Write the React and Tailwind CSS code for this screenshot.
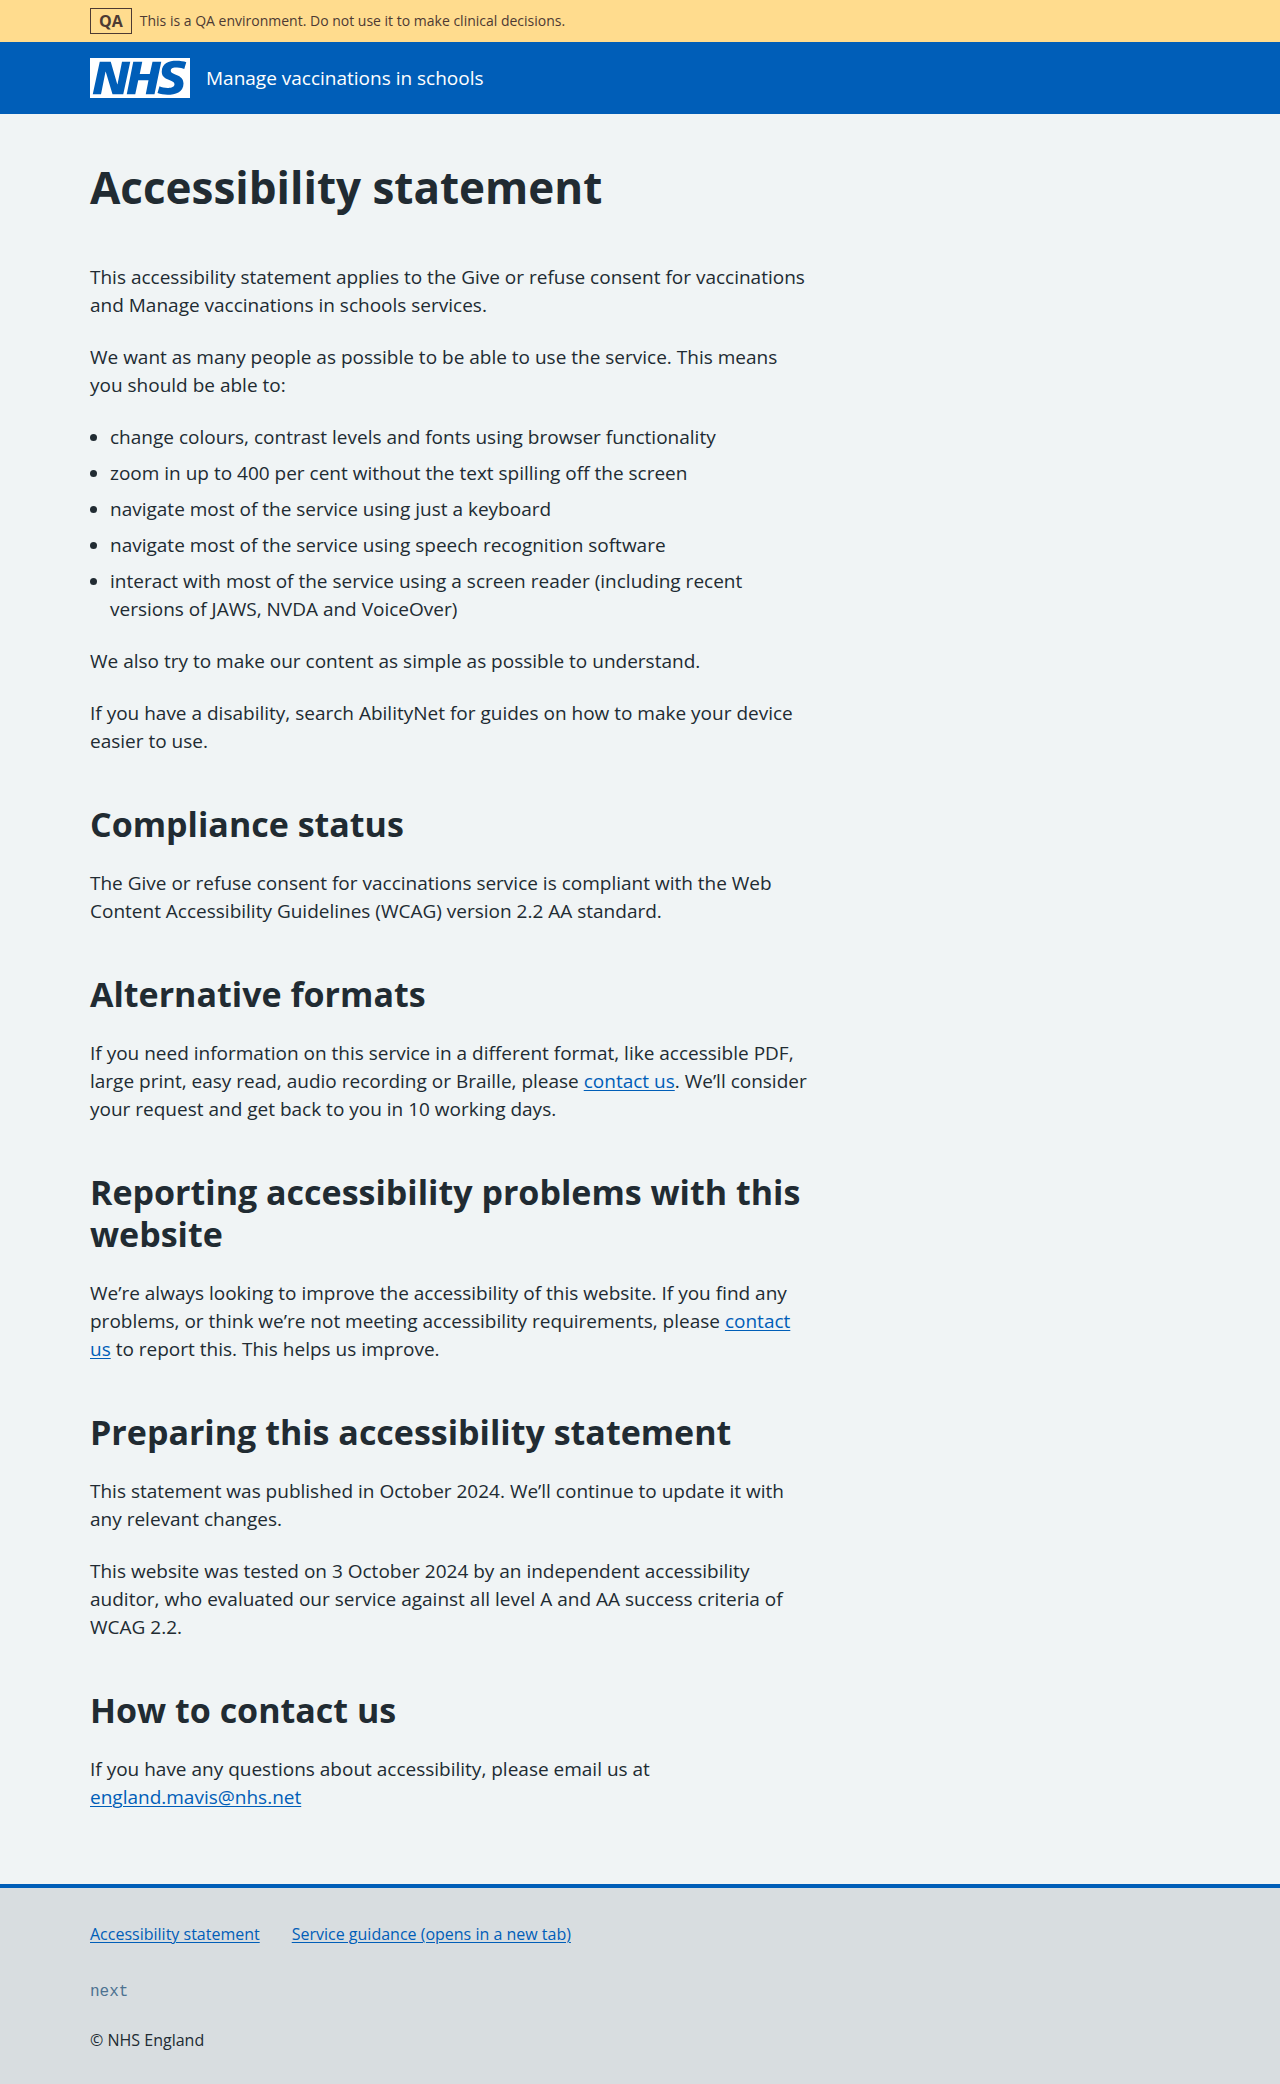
function Logo() {
  return (
    <svg role="img" aria-label="NHS" viewBox="0 0 40 16" className="h-10 w-[100px] shrink-0">
      <path fill="#fff" d="M0 0h40v16H0z" />
      <path
        fill="#005eb8"
        d="M3.9 1.5h4.4l2.6 9h.1l1.8-9h3.3l-2.8 13H9l-2.7-9h-.1l-1.8 9H1.1M17.3 1.5h3.6l-1 4.9h4L25 1.5h3.5l-2.7 13h-3.5l1.1-5.6h-4.1l-1.2 5.6h-3.4M37.7 4.4c-.7-.3-1.6-.6-2.9-.6-1.4 0-2.5.2-2.5 1.3 0 1.8 5.1 1.2 5.1 5.1 0 3.6-3.3 4.5-6.4 4.5-1.3 0-2.9-.3-4-.7l.8-2.7c.7.4 2.1.7 3.2.7s2.8-.2 2.8-1.5c0-2.1-5.1-1.3-5.1-5 0-3.4 2.9-4.4 5.8-4.4 1.6 0 3.1.2 4 .6"
      />
    </svg>
  );
}

function Container({ className = "", children }) {
  return <div className={`mx-auto max-w-[1100px] ${className}`}>{children}</div>;
}

function Link({ href, children }) {
  return (
    <a href={href} className="text-[#005eb8] underline decoration-1 underline-offset-2 hover:no-underline">
      {children}
    </a>
  );
}

function Section({ title, children }) {
  return (
    <section className="mt-12">
      <h2 className="mb-6 text-[34px] leading-[42px] font-bold">{title}</h2>
      <div className="flex flex-col gap-6">{children}</div>
    </section>
  );
}

const abilities = [
  "change colours, contrast levels and fonts using browser functionality",
  "zoom in up to 400 per cent without the text spilling off the screen",
  "navigate most of the service using just a keyboard",
  "navigate most of the service using speech recognition software",
  "interact with most of the service using a screen reader (including recent versions of JAWS, NVDA and VoiceOver)",
];

export default function App() {
  return (
    <div className="min-h-screen bg-[#f0f4f5] font-['Open_Sans','Noto_Sans',sans-serif] text-[19px] leading-7 text-[#212b32]">
      <div className="bg-[#ffdc8e] py-2 text-[#4d3a33]">
        <Container className="flex items-center gap-2">
          <strong className="border border-current px-2 text-base leading-6 font-bold">QA</strong>
          <span className="text-sm leading-6">
            This is a QA environment. Do not use it to make clinical decisions.
          </span>
        </Container>
      </div>

      <header className="bg-[#005eb8] py-4 text-white">
        <Container className="flex items-center gap-4">
          <Logo />
          <a href="#home">Manage vaccinations in schools</a>
        </Container>
      </header>

      <Container>
        <main className="max-w-[722px] pt-12 pb-[73px]">
          <h1 className="mb-[51px] text-[44px] leading-[50px] font-bold">Accessibility statement</h1>
          <div className="flex flex-col gap-6">
            <p>
              This accessibility statement applies to the Give or refuse consent for vaccinations and
              Manage vaccinations in schools services.
            </p>
            <p>
              We want as many people as possible to be able to use the service. This means you should
              be able to:
            </p>
            <ul className="flex list-disc flex-col gap-2 pl-5">
              {abilities.map((item) => (
                <li key={item}>{item}</li>
              ))}
            </ul>
            <p>We also try to make our content as simple as possible to understand.</p>
            <p>
              If you have a disability, search AbilityNet for guides on how to make your device easier
              to use.
            </p>
          </div>

          <Section title="Compliance status">
            <p>
              The Give or refuse consent for vaccinations service is compliant with the Web Content
              Accessibility Guidelines (WCAG) version 2.2 AA standard.
            </p>
          </Section>

          <Section title="Alternative formats">
            <p>
              If you need information on this service in a different format, like accessible PDF,
              large print, easy read, audio recording or Braille, please{" "}
              <Link href="#contact">contact us</Link>. We’ll consider your request and get back to you
              in 10 working days.
            </p>
          </Section>

          <Section title="Reporting accessibility problems with this website">
            <p>
              We’re always looking to improve the accessibility of this website. If you find any
              problems, or think we’re not meeting accessibility requirements, please{" "}
              <Link href="#contact">contact us</Link> to report this. This helps us improve.
            </p>
          </Section>

          <Section title="Preparing this accessibility statement">
            <p>
              This statement was published in October 2024. We’ll continue to update it with any
              relevant changes.
            </p>
            <p>
              This website was tested on 3 October 2024 by an independent accessibility auditor, who
              evaluated our service against all level A and AA success criteria of WCAG 2.2.
            </p>
          </Section>

          <Section title="How to contact us">
            <p id="contact">
              If you have any questions about accessibility, please email us at{" "}
              <Link href="mailto:england.mavis@nhs.net">england.mavis@nhs.net</Link>
            </p>
          </Section>
        </main>
      </Container>

      <footer className="border-t-4 border-[#005eb8] bg-[#d8dde0] pt-[34px] pb-8 text-base leading-6">
        <Container>
          <ul className="mb-[34px] flex flex-wrap gap-x-8 gap-y-2">
            <li>
              <Link href="#statement">Accessibility statement</Link>
            </li>
            <li>
              <Link href="#guidance">Service guidance (opens in a new tab)</Link>
            </li>
          </ul>
          <p className="mb-6 font-['Liberation_Mono',monospace] text-[#4c7291]">next</p>
          <p>© NHS England</p>
        </Container>
      </footer>
    </div>
  );
}
